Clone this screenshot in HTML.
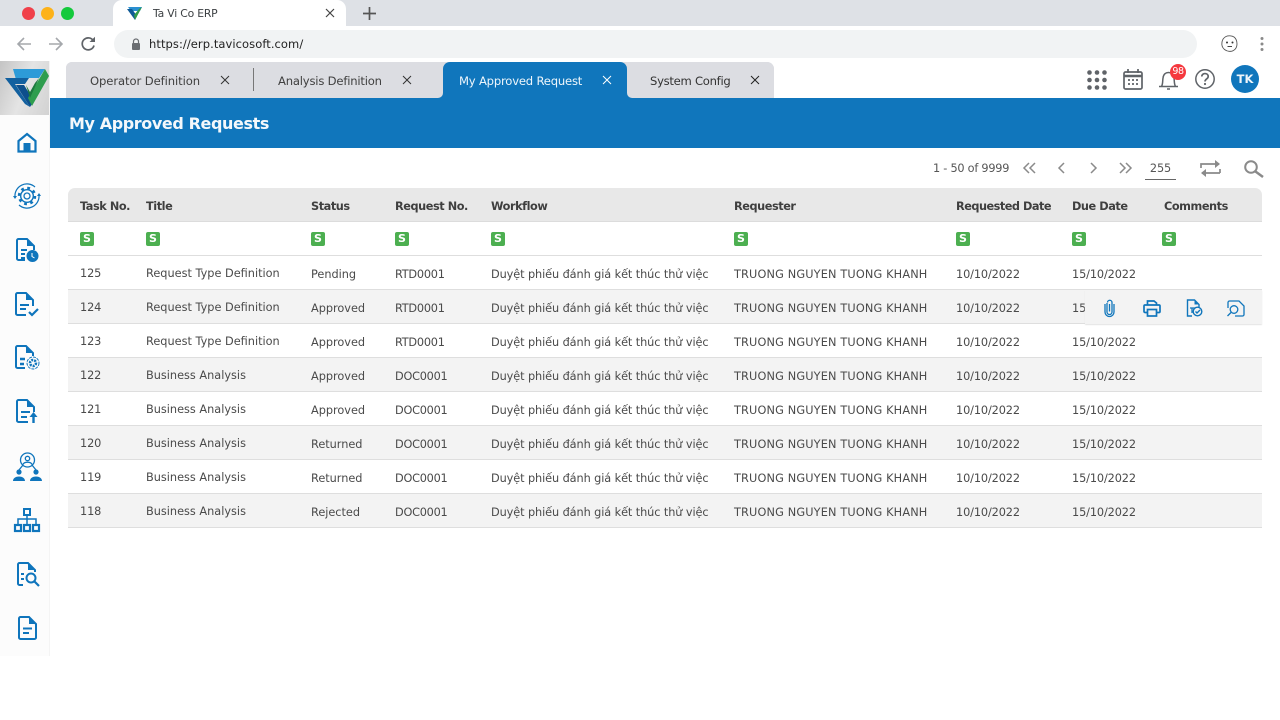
<!DOCTYPE html>
<html lang="vi"><head><meta charset="utf-8"><title>Ta Vi Co ERP</title>
<style>
*{box-sizing:border-box}
html,body{margin:0;padding:0;width:1280px;height:720px;overflow:hidden;background:#fff;font-family:"DejaVu Sans","Liberation Sans",sans-serif;color:#4a4a4a}
.a{position:absolute;white-space:nowrap}
svg{position:absolute;overflow:visible}
.tab{position:absolute;top:62px;height:36px;background:#dcdde2}
.row{position:absolute;left:68px;width:1194px;height:34px;border-bottom:1px solid #dedede}
.row.g{background:#f3f3f3}
.row span{position:absolute;white-space:nowrap;font-size:11.3px;line-height:16px;top:11px;color:#4a4a4a;letter-spacing:-.12px}
.row .c1{left:12px;top:10px}.row .c2{left:78px;top:10px;letter-spacing:0}.row .c3{left:243px;letter-spacing:-.02px}.row .c4{left:327px;letter-spacing:-.25px}.row .c5{left:423px;letter-spacing:-.09px}.row .c6{left:666px;letter-spacing:.15px}.row .c7{left:888px}.row .c8{left:1004px}
.hd span{position:absolute;top:11px;font-size:11.3px;line-height:16px;font-weight:bold;color:#3f3f3f;white-space:nowrap;letter-spacing:-.44px}
.s{position:absolute;top:10px;width:14px;height:14px;background:#4caf50;border-radius:2px;color:#fff;font-size:11px;line-height:14px;text-align:center;font-weight:bold}
</style></head><body>

<!-- browser chrome -->
<div class="a" style="left:0;top:0;width:1280px;height:26px;background:#dee1e6"></div>
<div class="a" style="left:28px;top:13px;margin:-6.5px 0 0 -6.5px;width:13px;height:13px;border-radius:50%;background:#f0404a"></div>
<div class="a" style="left:47px;top:13px;margin:-6.5px 0 0 -6.5px;width:13px;height:13px;border-radius:50%;background:#fdb219"></div>
<div class="a" style="left:67px;top:13px;margin:-6.5px 0 0 -6.5px;width:13px;height:13px;border-radius:50%;background:#14c93c"></div>
<div class="a" style="left:113px;top:0;width:233px;height:26px;background:#fff;border-radius:9px 9px 0 0"></div>
<svg style="left:127px;top:6px" width="16" height="14" viewBox="0 0 16 14"><path d="M1 1H15L13 5H4Z" fill="#2a8fd0"/><path d="M0 3L8 14L10 10L5 3Z" fill="#0f5a96"/><path d="M15 1L8 14L7 9L12 3Z" fill="#2f9b4b"/></svg>
<div class="a" style="left:153px;top:6px;font-size:10.8px;line-height:16px;color:#3c4043;letter-spacing:-.2px">Ta Vi Co ERP</div>
<svg style="left:325px;top:8px" width="10" height="10" viewBox="0 0 10 10"><path d="M1 1L9 9M9 1L1 9" stroke="#444" stroke-width="1.2"/></svg>
<svg style="left:363px;top:7px" width="13" height="13" viewBox="0 0 13 13"><path d="M6.5 0V13M0 6.5H13" stroke="#555" stroke-width="1.7"/></svg>
<svg style="left:16px;top:36px" width="16" height="16" viewBox="0 0 16 16"><path d="M15 8H2M8 2L2 8L8 14" fill="none" stroke="#a5a8ac" stroke-width="1.6"/></svg>
<svg style="left:48px;top:36px" width="16" height="16" viewBox="0 0 16 16"><path d="M1 8H14M8 2L14 8L8 14" fill="none" stroke="#a5a8ac" stroke-width="1.6"/></svg>
<svg style="left:80px;top:36px" width="16" height="16" viewBox="0 0 16 16"><path d="M13.5 5A6 6 0 1 0 14 9.5" fill="none" stroke="#5f6368" stroke-width="1.7"/><path d="M9.5 6H15V.8Z" fill="#5f6368"/></svg>
<div class="a" style="left:114px;top:30px;width:1083px;height:28px;background:#f1f3f4;border-radius:14px"></div>
<svg style="left:131px;top:38px" width="10" height="12" viewBox="0 0 10 12"><path d="M2.5 5V3.5a2.5 2.5 0 0 1 5 0V5" fill="none" stroke="#6b6e72" stroke-width="1.2"/><rect x="1" y="5" width="8" height="7" rx="1" fill="#6b6e72"/></svg>
<div class="a" style="left:149px;top:36px;font-size:11.5px;line-height:16px;color:#222;letter-spacing:.07px">https://erp.tavicosoft.com/</div>
<svg style="left:1221px;top:35px" width="17" height="17" viewBox="0 0 17 17"><path d="M5 1.5C7 .5 11 .5 13 2S16 6 16 9S15 14 12.5 15.5S6 16.5 3.5 14.5S.5 10 1 7S3 2.5 5 1.5Z" fill="#fff" stroke="#555" stroke-width=".9"/><circle cx="6" cy="7.5" r="1" fill="#333"/><circle cx="11.5" cy="7.5" r="1" fill="#333"/><path d="M6.5 11.5H11" stroke="#333" stroke-width=".9"/></svg>
<svg style="left:1260px;top:36px" width="4" height="16" viewBox="0 0 4 16"><circle cx="2" cy="2.5" r="1.5" fill="#8a8a8a"/><circle cx="2" cy="8" r="1.5" fill="#8a8a8a"/><circle cx="2" cy="13.5" r="1.5" fill="#8a8a8a"/></svg>

<!-- sidebar -->
<div class="a" style="left:0;top:61px;width:50px;height:595px;background:#fcfcfc;border-right:1px solid #f4f4f4"></div>
<div class="a" style="left:0;top:61px;width:49px;height:54px;background:linear-gradient(110deg,#c4c4c4,#e4e4e4 50%,#d2d2d2)"></div>
<svg style="left:5px;top:68px" width="44" height="40" viewBox="0 0 44 40"><path d="M8 1H40L34 10H16L19 15L12 15Z" fill="#2d9bd8"/><path d="M0 10H24L20 16H10L25 39L20 36Z" fill="#12609f"/><path d="M11 17H19L29 33L25 39Z" fill="#0d4f8c"/><path d="M40 1L44 8L27 38L23 30L33 13Z" fill="#2f9d4e"/><path d="M21 17L25 24L30 15L34 10L25 30Z" fill="#1d7a3f"/></svg>

<svg style="left:17px;top:132px" width="20" height="21" viewBox="0 0 20 21"><path d="M10 2L18.5 9V19.5H1.5V9Z" fill="none" stroke="#0f75bc" stroke-width="2.2"/><rect x="6.5" y="11" width="7" height="8" fill="#0f75bc"/></svg>
<svg style="left:13px;top:182px" width="28" height="28" viewBox="0 0 28 28" fill="none" stroke="#0f75bc"><circle cx="14" cy="14" r="8" stroke-width="2.5" stroke-dasharray="2.8 3.48"/><circle cx="14" cy="14" r="6.3" stroke-width="1.4"/><circle cx="14" cy="14" r="3" stroke-width="1.3"/><path d="M2 15A12 12 0 0 1 22 5M26 13A12 12 0 0 1 6 23" stroke-width="1.2"/><path d="M0 14H4L2 17ZM24 14H28L26 11Z" fill="#0f75bc" stroke="none"/></svg>
<svg style="left:16px;top:238px" width="23" height="25" viewBox="0 0 23 25"><path d="M9 22H2.5A1.5 1.5 0 0 1 1 20.5V2.5A1.5 1.5 0 0 1 2.5 1H11L18 8V12" fill="none" stroke="#0f75bc" stroke-width="2"/><path d="M11 1V8H18Z" fill="#0f75bc"/><path d="M5 12H11M5 16H9M5 20H9" stroke="#0f75bc" stroke-width="2"/><circle cx="16.5" cy="18" r="6" fill="#0f75bc"/><path d="M16 15V18.5L18.5 20" stroke="#fff" fill="none"/></svg>
<svg style="left:15px;top:292px" width="24" height="25" viewBox="0 0 24 25" fill="none" stroke="#0f75bc" stroke-width="2"><path d="M11 23H2.5A1.5 1.5 0 0 1 1 21.5V2.5A1.5 1.5 0 0 1 2.5 1H11L18 8V14"/><path d="M11 1V8H18Z" fill="#0f75bc" stroke="none"/><path d="M5 13H14M5 17H11"/><path d="M14 20L17 23L23 17" stroke-width="2.2"/></svg>
<svg style="left:15px;top:345px" width="25" height="25" viewBox="0 0 25 25" fill="none" stroke="#0f75bc" stroke-width="2"><path d="M10 23H2.5A1.5 1.5 0 0 1 1 21.5V2.5A1.5 1.5 0 0 1 2.5 1H11L18 8V11"/><path d="M11 1V8H18Z" fill="#0f75bc" stroke="none"/><path d="M5 14H10M5 19H9" stroke-width="2.5"/><circle cx="18" cy="18" r="3" stroke-width="2.5" stroke-dasharray="2 1"/><circle cx="18" cy="18" r="6" stroke-width="1" stroke-dasharray="3 1"/></svg>
<svg style="left:16px;top:399px" width="23" height="25" viewBox="0 0 23 25" fill="none" stroke="#0f75bc" stroke-width="2"><path d="M12 23H2.5A1.5 1.5 0 0 1 1 21.5V2.5A1.5 1.5 0 0 1 2.5 1H11L18 8V13"/><path d="M11 1V8H18Z" fill="#0f75bc" stroke="none"/><path d="M5 13H14M5 18H11"/><path d="M17.5 24V16" stroke-width="2.4"/><path d="M13.5 18L17.5 13L21.5 18Z" fill="#0f75bc" stroke="none"/></svg>
<svg style="left:13px;top:452px" width="29" height="29" viewBox="0 0 29 29" fill="none" stroke="#0f75bc"><circle cx="14.5" cy="8" r="7" stroke-width="1.3"/><circle cx="14.5" cy="6.5" r="2.2" stroke-width="1.3"/><path d="M10 12.5C11 9.5 18 9.5 19 12.5" stroke-width="1.3"/><path d="M10 13L6 18M19 13L23 18" stroke-width="1.3"/><circle cx="6" cy="20" r="2.6" fill="#0f75bc" stroke="none"/><circle cx="23" cy="20" r="2.6" fill="#0f75bc" stroke="none"/><path d="M0 29C0 23 12 23 12 29ZM17 29C17 23 29 23 29 29Z" fill="#0f75bc" stroke="none"/></svg>
<svg style="left:14px;top:508px" width="26" height="24" viewBox="0 0 26 24" fill="none" stroke="#0f75bc"><rect x="10" y="1" width="6" height="6" stroke-width="2"/><path d="M13 7V11M4 16V11H22V16M13 11V16" stroke-width="1.5"/><rect x="1" y="17" width="6" height="6" stroke-width="2.2"/><rect x="10" y="17" width="6" height="6" stroke-width="2.2"/><rect x="19" y="17" width="6" height="6" stroke-width="2.2"/></svg>
<svg style="left:17px;top:562px" width="23" height="25" viewBox="0 0 23 25" fill="none" stroke="#0f75bc" stroke-width="2"><path d="M6 23H2.5A1.5 1.5 0 0 1 1 21.5V2.5A1.5 1.5 0 0 1 2.5 1H11L18 8V10"/><path d="M11 1V8H18Z" fill="#0f75bc" stroke="none"/><path d="M4 12H7M4 17H7" stroke-width="2"/><circle cx="14" cy="16" r="4.5" stroke-width="2"/><path d="M17.5 19.5L22 24" stroke-width="2.2"/></svg>
<svg style="left:18px;top:616px" width="19" height="24" viewBox="0 0 19 24" fill="none" stroke="#0f75bc" stroke-width="2"><path d="M11 1H2.500A1.500 1.500 0 0 0 1 2.500V21.500A1.500 1.500 0 0 0 2.500 23H16.500A1.500 1.500 0 0 0 18 21.500V8Z"/><path d="M11 1V8H18Z" fill="#0f75bc" stroke="none"/><path d="M5 12.500H14M5 17H11"/></svg>

<!-- app tabs -->
<div class="tab" style="left:66px;width:708px;border-radius:6px 7px 0 0"></div>
<div class="a" style="left:436px;top:88px;width:198px;height:10px;background:#1076bc"></div>
<div class="tab" style="left:66px;width:377px;border-radius:6px 0 5px 0"></div>
<div class="a" style="left:90px;top:73px;font-size:11.6px;line-height:16px;color:#404040;letter-spacing:-.09px">Operator Definition</div>
<svg style="left:221px;top:76px" width="8" height="8" viewBox="0 0 8 8"><path d="M0 0L8 8M8 0L0 8" stroke="#333" stroke-width="1"/></svg>
<div class="a" style="left:253px;top:68px;width:1px;height:23px;background:#777"></div>
<div class="a" style="left:278px;top:73px;font-size:11.6px;line-height:16px;color:#404040;letter-spacing:-.2px">Analysis Definition</div>
<svg style="left:403px;top:76px" width="8" height="8" viewBox="0 0 8 8"><path d="M0 0L8 8M8 0L0 8" stroke="#333" stroke-width="1"/></svg>
<div class="tab" style="left:443px;width:184px;background:#1076bc;top:62px;border-radius:7px 7px 0 0"></div>
<div class="a" style="left:459px;top:73px;font-size:11.6px;line-height:16px;color:#eef6fb;letter-spacing:-.2px">My Approved Request</div>
<svg style="left:603px;top:76px" width="8" height="8" viewBox="0 0 8 8"><path d="M0 0L8 8M8 0L0 8" stroke="#fff" stroke-width="1"/></svg>
<div class="tab" style="left:627px;width:147px;border-radius:0 7px 0 5px"></div>
<div class="a" style="left:650px;top:73px;font-size:11.6px;line-height:16px;color:#333;letter-spacing:-.28px">System Config</div>
<svg style="left:751px;top:76px" width="8" height="8" viewBox="0 0 8 8"><path d="M0 0L8 8M8 0L0 8" stroke="#222" stroke-width="1"/></svg>

<!-- top right icons -->
<svg style="left:1087px;top:70px" width="20" height="20" viewBox="0 0 20 20" fill="#5f6368"><circle cx="2.5" cy="2.5" r="2.3"/><circle cx="10" cy="2.5" r="2.3"/><circle cx="17.5" cy="2.5" r="2.3"/><circle cx="2.5" cy="10" r="2.3"/><circle cx="10" cy="10" r="2.3"/><circle cx="17.5" cy="10" r="2.3"/><circle cx="2.5" cy="17.5" r="2.3"/><circle cx="10" cy="17.5" r="2.3"/><circle cx="17.5" cy="17.5" r="2.3"/></svg>
<svg style="left:1123px;top:69px" width="20" height="21" viewBox="0 0 20 21"><rect x="1" y="3" width="18" height="17" rx="1.5" fill="none" stroke="#5f6368" stroke-width="1.7"/><path d="M1 7H19" stroke="#5f6368" stroke-width="2.5"/><path d="M5 0V4M15 0V4" stroke="#5f6368" stroke-width="1.7"/><path d="M5 11H15M5 15H15" stroke="#5f6368" stroke-width="1.8" stroke-dasharray="2 2"/></svg>
<svg style="left:1159px;top:71px" width="20" height="20" viewBox="0 0 20 20" fill="none" stroke="#5f6368" stroke-width="1.5"><path d="M0 15.5H19M2.5 15.5C4 13 3.5 10 4 7C4.5 3 7 1.5 9.5 1.5S14.5 3 15 7C15.5 10 15 13 16.5 15.5"/><path d="M8 18H11" stroke-width="1.5"/></svg>
<div class="a" style="left:1170px;top:64px;width:16px;height:16px;border-radius:50%;background:#f5393f;color:#fff;font-size:9.5px;line-height:16px;text-align:center;letter-spacing:-.4px">98</div>
<svg style="left:1195px;top:69px" width="20" height="20" viewBox="0 0 20 20" fill="none" stroke="#5f6368"><circle cx="10" cy="10" r="9.2" stroke-width="1.5"/><path d="M6.8 7.5C6.8 3.5 13.2 3.7 13.2 7.5C13.2 10 10 9.8 10 12.5" stroke-width="1.7"/><circle cx="10" cy="15" r="1.1" fill="#5f6368" stroke="none"/></svg>
<div class="a" style="left:1231px;top:65px;width:28px;height:28px;border-radius:50%;background:#1076bc;color:#f1f6fa;font-size:11.5px;line-height:28px;text-align:center;font-weight:bold">TK</div>

<!-- banner -->
<div class="a" style="left:50px;top:98px;width:1230px;height:50px;background:#1076bc"></div>
<div class="a" style="left:69px;top:113px;font-size:16px;line-height:22px;color:#f4f8fb;font-weight:bold;letter-spacing:-.4px">My Approved Requests</div>

<!-- pagination -->
<div class="a" style="left:933px;top:161px;font-size:11.3px;line-height:16px;color:#555;letter-spacing:-.25px">1 - 50 of 9999</div>
<svg style="left:1023px;top:162px" width="13" height="12" viewBox="0 0 13 12" fill="none" stroke="#8a8a8a" stroke-width="1.5"><path d="M6 1L1 6L6 11M12 1L7 6L12 11"/></svg>
<svg style="left:1058px;top:162px" width="7" height="12" viewBox="0 0 7 12" fill="none" stroke="#8a8a8a" stroke-width="1.5"><path d="M6 1L1 6L6 11"/></svg>
<svg style="left:1090px;top:162px" width="7" height="12" viewBox="0 0 7 12" fill="none" stroke="#8a8a8a" stroke-width="1.5"><path d="M1 1L6 6L1 11"/></svg>
<svg style="left:1119px;top:162px" width="13" height="12" viewBox="0 0 13 12" fill="none" stroke="#8a8a8a" stroke-width="1.5"><path d="M1 1L6 6L1 11M7 1L12 6L7 11"/></svg>
<div class="a" style="left:1145px;top:161px;width:31px;height:19px;border-bottom:1px solid #666;font-size:11.3px;line-height:16px;color:#555;text-align:center;letter-spacing:-.1px">255</div>
<svg style="left:1200px;top:160px" width="21" height="17" viewBox="0 0 21 17" fill="none" stroke="#8a8a8a" stroke-width="1.7"><path d="M1 8V4H19"/><path d="M20 13H2M20 9V13"/><path d="M15 0L20 4L15 8" fill="#8a8a8a" stroke="none"/><path d="M6 9L1 13L6 17" fill="#8a8a8a" stroke="none"/></svg>
<svg style="left:1244px;top:160px" width="20" height="18" viewBox="0 0 20 18" fill="none" stroke="#8a8a8a"><circle cx="7" cy="7" r="5.8" stroke-width="2"/><path d="M11.5 11.5L19 17" stroke-width="2.5"/></svg>

<!-- table header -->
<div class="hd a" style="left:68px;top:188px;width:1194px;height:34px;background:#e8e8e8;border-radius:7px 7px 0 0;border-bottom:1px solid #dcdcdc">
<span style="left:12px">Task No.</span><span style="left:78px">Title</span><span style="left:243px">Status</span><span style="left:327px">Request No.</span><span style="left:423px">Workflow</span><span style="left:666px">Requester</span><span style="left:888px;letter-spacing:-.5px">Requested Date</span><span style="left:1004px">Due Date</span><span style="left:1096px">Comments</span>
</div>
<div class="a" style="left:68px;top:222px;width:1194px;height:34px;border-bottom:1px solid #dedede">
<div class="s" style="left:12px">S</div><div class="s" style="left:78px">S</div><div class="s" style="left:243px">S</div><div class="s" style="left:327px">S</div><div class="s" style="left:423px">S</div><div class="s" style="left:666px">S</div><div class="s" style="left:888px">S</div><div class="s" style="left:1004px">S</div><div class="s" style="left:1094px">S</div>
</div>

<div class="row" style="top:256px"><span class="c1">125</span><span class="c2">Request Type Definition</span><span class="c3">Pending</span><span class="c4">RTD0001</span><span class="c5">Duyệt phiếu đánh giá kết thúc thử việc</span><span class="c6">TRUONG NGUYEN TUONG KHANH</span><span class="c7">10/10/2022</span><span class="c8">15/10/2022</span></div>
<div class="row g" style="top:290px"><span class="c1">124</span><span class="c2">Request Type Definition</span><span class="c3">Approved</span><span class="c4">RTD0001</span><span class="c5">Duyệt phiếu đánh giá kết thúc thử việc</span><span class="c6">TRUONG NGUYEN TUONG KHANH</span><span class="c7">10/10/2022</span><span class="c8">15/10/2022</span></div>
<div class="row" style="top:324px"><span class="c1">123</span><span class="c2">Request Type Definition</span><span class="c3">Approved</span><span class="c4">RTD0001</span><span class="c5">Duyệt phiếu đánh giá kết thúc thử việc</span><span class="c6">TRUONG NGUYEN TUONG KHANH</span><span class="c7">10/10/2022</span><span class="c8">15/10/2022</span></div>
<div class="row g" style="top:358px"><span class="c1">122</span><span class="c2">Business Analysis</span><span class="c3">Approved</span><span class="c4">DOC0001</span><span class="c5">Duyệt phiếu đánh giá kết thúc thử việc</span><span class="c6">TRUONG NGUYEN TUONG KHANH</span><span class="c7">10/10/2022</span><span class="c8">15/10/2022</span></div>
<div class="row" style="top:392px"><span class="c1">121</span><span class="c2">Business Analysis</span><span class="c3">Approved</span><span class="c4">DOC0001</span><span class="c5">Duyệt phiếu đánh giá kết thúc thử việc</span><span class="c6">TRUONG NGUYEN TUONG KHANH</span><span class="c7">10/10/2022</span><span class="c8">15/10/2022</span></div>
<div class="row g" style="top:426px"><span class="c1">120</span><span class="c2">Business Analysis</span><span class="c3">Returned</span><span class="c4">DOC0001</span><span class="c5">Duyệt phiếu đánh giá kết thúc thử việc</span><span class="c6">TRUONG NGUYEN TUONG KHANH</span><span class="c7">10/10/2022</span><span class="c8">15/10/2022</span></div>
<div class="row" style="top:460px"><span class="c1">119</span><span class="c2">Business Analysis</span><span class="c3">Returned</span><span class="c4">DOC0001</span><span class="c5">Duyệt phiếu đánh giá kết thúc thử việc</span><span class="c6">TRUONG NGUYEN TUONG KHANH</span><span class="c7">10/10/2022</span><span class="c8">15/10/2022</span></div>
<div class="row g" style="top:494px"><span class="c1">118</span><span class="c2">Business Analysis</span><span class="c3">Rejected</span><span class="c4">DOC0001</span><span class="c5">Duyệt phiếu đánh giá kết thúc thử việc</span><span class="c6">TRUONG NGUYEN TUONG KHANH</span><span class="c7">10/10/2022</span><span class="c8">15/10/2022</span></div>

<!-- hover actions -->
<div class="a" style="left:1085px;top:290px;width:177px;height:34px;background:#f3f3f3;box-shadow:0 1px 1px #e4e4e4"></div>
<svg style="left:1104px;top:299px" width="11" height="18" viewBox="0 0 11 18" fill="none" stroke="#1076bc" stroke-width="1.3"><path d="M3 4V13A2.5 2.5 0 0 0 8 13V3.5A2.2 2.2 0 0 0 3.5 3.5"/><path d="M5.5 5V12.5"/><path d="M1 5V13A4.5 4.5 0 0 0 10 13V5"/></svg>
<svg style="left:1143px;top:300px" width="18" height="17" viewBox="0 0 18 17" fill="none" stroke="#1076bc" stroke-width="1.7"><path d="M4.5 5V1H11L13.5 3V5"/><rect x="1" y="5" width="16" height="7.5" rx="1"/><rect x="4.5" y="9.5" width="9" height="6.5" fill="#f3f3f3"/></svg>
<svg style="left:1186px;top:299px" width="17" height="18" viewBox="0 0 17 18" fill="none" stroke="#1076bc" stroke-width="1.4"><path d="M6 17H1.5V1H8.5L13 5.5V8"/><path d="M8.5 1V5.5H13Z" fill="#1076bc" stroke="none"/><path d="M4 9H9M6 9V14" stroke-width="1.3"/><circle cx="11.5" cy="12.5" r="4.3"/><path d="M9.5 12.5L11 14L14 11"/></svg>
<svg style="left:1227px;top:300px" width="18" height="17" viewBox="0 0 18 17" fill="none" stroke="#1076bc" stroke-width="1.3"><path d="M1 8V2.5A1.5 1.5 0 0 1 2.5 1H12L17 6V14.5A1.5 1.5 0 0 1 15.5 16H8"/><circle cx="7" cy="9.5" r="3.8"/><path d="M4 12.5L0.5 16"/></svg>
</body></html>
